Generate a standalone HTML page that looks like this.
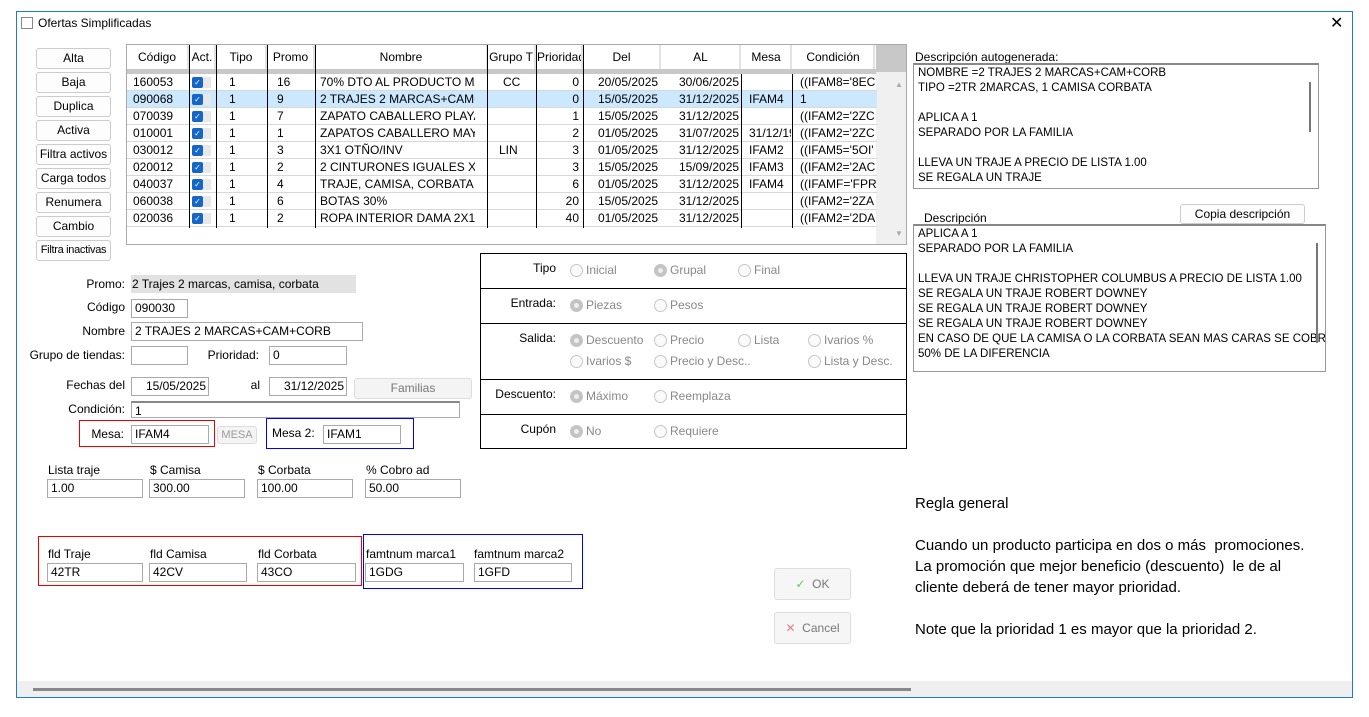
<!DOCTYPE html>
<html><head><meta charset="utf-8"><style>
*{margin:0;padding:0;box-sizing:border-box}
body{width:1369px;height:717px;background:#fff;font-family:"Liberation Sans",sans-serif;font-size:12px;color:#000;position:relative;overflow:hidden}
.a{position:absolute;white-space:nowrap}
.win{position:absolute;left:16px;top:11px;width:1337px;height:687px;border:1px solid #1e7bd0}
.btn{position:absolute;left:36px;width:75px;height:21px;border:1px solid #ccc;border-radius:3px;background:#fdfdfd;text-align:center;line-height:19px;white-space:nowrap;overflow:hidden}
.inp{position:absolute;height:19px;border:1px solid #aaa;background:#fff;padding-left:3px;line-height:17px;white-space:nowrap}
.lbl{position:absolute;text-align:right;white-space:nowrap}
.hc{position:absolute;top:45px;height:24px;background:#fff;text-align:center;line-height:24px;border-right:2px solid #e2e2e2}
.row{position:absolute;left:127px;width:750px;height:17px;border-bottom:1px solid #d8d8d8}
.c{position:absolute;top:0;height:17px;line-height:17px;overflow:hidden;white-space:nowrap}
.vl{position:absolute;top:45px;height:183px;width:1px;background:#000}
.chk{position:absolute;left:65px;top:3px;width:11px;height:11px;background:#1466c8;border-radius:2px;color:#fff;font-size:8px;line-height:11px;text-align:center}
.chk:after{content:"";position:absolute;left:11px;top:0;width:8px;height:11px;background:#e8e8e8}
.rad{position:absolute;width:13px;height:13px;border:1px solid #c6c6c6;border-radius:50%;background:#fafafa}
.rad.on{background:#c4c4c4;border-color:#c4c4c4}
.rad.on:after{content:"";position:absolute;left:3px;top:3px;width:5px;height:5px;border-radius:50%;background:#eee}
.rt{position:absolute;color:#888;white-space:nowrap}
.box{position:absolute;left:480px;width:427px;border:1px solid #000;border-bottom:none}
.ta{position:absolute;border:1px solid #999;border-top:2px solid #888;background:#fff;padding:1px 0 0 4px;line-height:15px;white-space:pre;overflow:hidden;font-size:11.5px}
</style></head><body>
<div class="win"></div>
<div class="a" style="left:21px;top:17px;width:12px;height:12px;border:1px solid #888"></div>
<div class="a" style="left:38px;top:16px">Ofertas Simplificadas</div>
<div class="a" style="left:1330px;top:13px;font-size:16px">✕</div>

<div class="btn" style="top:48px">Alta</div>
<div class="btn" style="top:72px">Baja</div>
<div class="btn" style="top:96px">Duplica</div>
<div class="btn" style="top:120px">Activa</div>
<div class="btn" style="top:144px">Filtra activos</div>
<div class="btn" style="top:168px">Carga todos</div>
<div class="btn" style="top:192px">Renumera</div>
<div class="btn" style="top:216px">Cambio</div>
<div class="btn" style="top:240px;font-size:11px;letter-spacing:-0.3px">Filtra inactivas</div>

<!-- grid -->
<div class="a" style="left:126px;top:44px;width:781px;height:201px;border:1px solid #aaa;background:#fff"></div>
<div class="a" style="left:127px;top:69px;width:749px;height:5px;background:#c8c8c8"></div>
<div class="a" style="left:876px;top:45px;width:30px;height:199px;background:#f0f0f0"></div>
<div class="a" style="left:876px;top:45px;width:30px;height:27px;background:#c8c8c8"></div>
<div class="a" style="left:895px;top:80px;color:#aaa;font-size:8px">▲</div>
<div class="a" style="left:895px;top:229px;color:#aaa;font-size:8px">▼</div>
<div class="hc" style="left:127px;width:62px">Código</div>
<div class="hc" style="left:190px;width:26px">Act.</div>
<div class="hc" style="left:217px;width:50px">Tipo</div>
<div class="hc" style="left:268px;width:47px">Promo</div>
<div class="hc" style="left:316px;width:172px">Nombre</div>
<div class="hc" style="left:488px;width:48px">Grupo T</div>
<div class="hc" style="left:537px;width:46px;overflow:hidden">Prioridad</div>
<div class="hc" style="left:584px;width:77px">Del</div>
<div class="hc" style="left:662px;width:79px">AL</div>
<div class="hc" style="left:742px;width:50px">Mesa</div>
<div class="hc" style="left:793px;width:82px">Condición</div>

<div class="row" style="top:74px"><div class="c" style="left:6px">160053</div><div class="chk">✓</div><div class="c" style="left:102px">1</div><div class="c" style="left:150px">16</div><div class="c" style="left:193px;width:155px">70% DTO AL PRODUCTO MA</div><div class="c" style="left:376px">CC</div><div class="c" style="left:408px;width:44px;text-align:right">0</div><div class="c" style="left:471px">20/05/2025</div><div class="c" style="left:552px">30/06/2025</div><div class="c" style="left:673px">((IFAM8='8EC</div></div>
<div class="row" style="top:91px;background:#cce8ff"><div class="c" style="left:6px">090068</div><div class="chk">✓</div><div class="c" style="left:102px">1</div><div class="c" style="left:150px">9</div><div class="c" style="left:193px;width:155px">2 TRAJES 2 MARCAS+CAM+(</div><div class="c" style="left:408px;width:44px;text-align:right">0</div><div class="c" style="left:471px">15/05/2025</div><div class="c" style="left:552px">31/12/2025</div><div class="c" style="left:622px">IFAM4</div><div class="c" style="left:673px">1</div></div>
<div class="row" style="top:108px"><div class="c" style="left:6px">070039</div><div class="chk">✓</div><div class="c" style="left:102px">1</div><div class="c" style="left:150px">7</div><div class="c" style="left:193px;width:155px">ZAPATO CABALLERO PLAYA</div><div class="c" style="left:408px;width:44px;text-align:right">1</div><div class="c" style="left:471px">15/05/2025</div><div class="c" style="left:552px">31/12/2025</div><div class="c" style="left:673px">((IFAM2='2ZC</div></div>
<div class="row" style="top:125px"><div class="c" style="left:6px">010001</div><div class="chk">✓</div><div class="c" style="left:102px">1</div><div class="c" style="left:150px">1</div><div class="c" style="left:193px;width:155px">ZAPATOS CABALLERO MAY(</div><div class="c" style="left:408px;width:44px;text-align:right">2</div><div class="c" style="left:471px">01/05/2025</div><div class="c" style="left:552px">31/07/2025</div><div class="c" style="left:622px;width:42px">31/12/19</div><div class="c" style="left:673px">((IFAM2='2ZC</div></div>
<div class="row" style="top:142px"><div class="c" style="left:6px">030012</div><div class="chk">✓</div><div class="c" style="left:102px">1</div><div class="c" style="left:150px">3</div><div class="c" style="left:193px;width:155px">3X1 OTÑO/INV</div><div class="c" style="left:372px">LIN</div><div class="c" style="left:408px;width:44px;text-align:right">3</div><div class="c" style="left:471px">01/05/2025</div><div class="c" style="left:552px">31/12/2025</div><div class="c" style="left:622px">IFAM2</div><div class="c" style="left:673px">((IFAM5='5OI'</div></div>
<div class="row" style="top:159px"><div class="c" style="left:6px">020012</div><div class="chk">✓</div><div class="c" style="left:102px">1</div><div class="c" style="left:150px">2</div><div class="c" style="left:193px;width:155px">2 CINTURONES IGUALES X $1</div><div class="c" style="left:408px;width:44px;text-align:right">3</div><div class="c" style="left:471px">15/05/2025</div><div class="c" style="left:552px">15/09/2025</div><div class="c" style="left:622px">IFAM3</div><div class="c" style="left:673px">((IFAM2='2AC</div></div>
<div class="row" style="top:176px"><div class="c" style="left:6px">040037</div><div class="chk">✓</div><div class="c" style="left:102px">1</div><div class="c" style="left:150px">4</div><div class="c" style="left:193px;width:155px">TRAJE, CAMISA, CORBATA</div><div class="c" style="left:408px;width:44px;text-align:right">6</div><div class="c" style="left:471px">01/05/2025</div><div class="c" style="left:552px">31/12/2025</div><div class="c" style="left:622px">IFAM4</div><div class="c" style="left:673px">((IFAMF='FPR</div></div>
<div class="row" style="top:193px"><div class="c" style="left:6px">060038</div><div class="chk">✓</div><div class="c" style="left:102px">1</div><div class="c" style="left:150px">6</div><div class="c" style="left:193px;width:155px">BOTAS 30%</div><div class="c" style="left:408px;width:44px;text-align:right">20</div><div class="c" style="left:471px">15/05/2025</div><div class="c" style="left:552px">31/12/2025</div><div class="c" style="left:673px">((IFAM2='2ZA</div></div>
<div class="row" style="top:210px"><div class="c" style="left:6px">020036</div><div class="chk">✓</div><div class="c" style="left:102px">1</div><div class="c" style="left:150px">2</div><div class="c" style="left:193px;width:155px">ROPA INTERIOR DAMA 2X1 F</div><div class="c" style="left:408px;width:44px;text-align:right">40</div><div class="c" style="left:471px">01/05/2025</div><div class="c" style="left:552px">31/12/2025</div><div class="c" style="left:673px">((IFAM2='2DA</div></div>
<div class="vl" style="left:189px"></div><div class="vl" style="left:216px"></div><div class="vl" style="left:267px"></div><div class="vl" style="left:315px"></div><div class="vl" style="left:487px"></div><div class="vl" style="left:536px"></div><div class="vl" style="left:583px"></div><div class="vl" style="left:741px;top:74px;height:154px"></div><div class="vl" style="left:792px;top:74px;height:154px"></div>

<!-- form -->
<div class="lbl" style="left:60px;width:65px;top:277px">Promo:</div>
<div class="a" style="left:131px;top:275px;width:225px;height:18px;background:#e2e2e2;padding:2px 1px">2 Trajes 2 marcas, camisa, corbata</div>
<div class="lbl" style="left:60px;width:65px;top:300px">Código</div>
<div class="inp" style="left:131px;top:299px;width:57px">090030</div>
<div class="lbl" style="left:60px;width:65px;top:324px">Nombre</div>
<div class="inp" style="left:131px;top:322px;width:232px">2 TRAJES 2 MARCAS+CAM+CORB</div>
<div class="lbl" style="left:20px;width:105px;top:348px">Grupo de tiendas:</div>
<div class="inp" style="left:131px;top:346px;width:57px"></div>
<div class="lbl" style="left:200px;width:59px;top:348px">Prioridad:</div>
<div class="inp" style="left:269px;top:346px;width:78px">0</div>
<div class="lbl" style="left:40px;width:85px;top:378px">Fechas del</div>
<div class="inp" style="left:131px;top:377px;width:78px;text-align:right;padding-right:2px">15/05/2025</div>
<div class="lbl" style="left:240px;width:20px;top:378px">al</div>
<div class="inp" style="left:269px;top:377px;width:78px;text-align:right;padding-right:2px">31/12/2025</div>
<div class="a" style="left:354px;top:378px;width:118px;height:21px;border:1px solid #ddd;border-radius:3px;background:#f4f4f4;color:#777;text-align:center;line-height:19px">Familias</div>
<div class="lbl" style="left:40px;width:85px;top:402px">Condición:</div>
<div class="inp" style="left:131px;top:401px;width:329px;height:17px;border-top:2px solid #888">1</div>
<div class="a" style="left:79px;top:420px;width:136px;height:27px;border:1px solid #e00"></div>
<div class="lbl" style="left:80px;width:44px;top:427px">Mesa:</div>
<div class="inp" style="left:131px;top:425px;width:78px">IFAM4</div>
<div class="a" style="left:217px;top:426px;width:40px;height:18px;border:1px solid #ddd;border-radius:3px;background:#f4f4f4;color:#999;text-align:center;line-height:16px;font-size:11px">MESA</div>
<div class="a" style="left:266px;top:418px;width:148px;height:31px;border:1px solid #00f"></div>
<div class="a" style="left:272px;top:426px">Mesa 2:</div>
<div class="inp" style="left:323px;top:425px;width:78px">IFAM1</div>

<div class="a" style="left:48px;top:463px">Lista traje</div><div class="inp" style="left:47px;top:479px;width:96px">1.00</div>
<div class="a" style="left:150px;top:463px">$ Camisa</div><div class="inp" style="left:149px;top:479px;width:96px">300.00</div>
<div class="a" style="left:258px;top:463px">$ Corbata</div><div class="inp" style="left:257px;top:479px;width:96px">100.00</div>
<div class="a" style="left:366px;top:463px">% Cobro ad</div><div class="inp" style="left:365px;top:479px;width:96px">50.00</div>

<div class="a" style="left:38px;top:536px;width:324px;height:50px;border:1px solid #e00"></div>
<div class="a" style="left:363px;top:534px;width:220px;height:55px;border:1px solid #00f"></div>
<div class="a" style="left:48px;top:547px">fld Traje</div><div class="inp" style="left:47px;top:563px;width:96px">42TR</div>
<div class="a" style="left:150px;top:547px">fld Camisa</div><div class="inp" style="left:149px;top:563px;width:98px">42CV</div>
<div class="a" style="left:258px;top:547px">fld Corbata</div><div class="inp" style="left:257px;top:563px;width:99px">43CO</div>
<div class="a" style="left:366px;top:547px">famtnum marca1</div><div class="inp" style="left:365px;top:563px;width:99px">1GDG</div>
<div class="a" style="left:474px;top:547px">famtnum marca2</div><div class="inp" style="left:474px;top:563px;width:98px">1GFD</div>

<div class="a" style="left:774px;top:568px;width:77px;height:32px;border:1px solid #ddd;border-radius:3px;background:#f6f6f6;color:#777;text-align:center;line-height:30px"><span style="color:#6bbf6b">✓</span>&nbsp;&nbsp;OK</div>
<div class="a" style="left:774px;top:612px;width:77px;height:32px;border:1px solid #ddd;border-radius:3px;background:#f6f6f6;color:#777;text-align:center;line-height:30px"><span style="color:#e08080">✕</span>&nbsp;&nbsp;Cancel</div>

<!-- options box -->
<div class="box" style="top:253px;height:36px"></div>
<div class="box" style="top:288px;height:36px"></div>
<div class="box" style="top:323px;height:57px"></div>
<div class="box" style="top:379px;height:36px"></div>
<div class="box" style="top:414px;height:35px;border-bottom:1px solid #000"></div>
<div class="lbl" style="left:480px;width:76px;top:261px">Tipo</div>
<div class="lbl" style="left:480px;width:76px;top:296px">Entrada:</div>
<div class="lbl" style="left:480px;width:76px;top:331px">Salida:</div>
<div class="lbl" style="left:480px;width:76px;top:387px">Descuento:</div>
<div class="lbl" style="left:480px;width:76px;top:422px">Cupón</div>

<div class="rad" style="left:570px;top:264px"></div><div class="rt" style="left:586px;top:263px">Inicial</div>
<div class="rad on" style="left:654px;top:264px"></div><div class="rt" style="left:670px;top:263px">Grupal</div>
<div class="rad" style="left:738px;top:264px"></div><div class="rt" style="left:754px;top:263px">Final</div>
<div class="rad on" style="left:570px;top:299px"></div><div class="rt" style="left:586px;top:298px">Piezas</div>
<div class="rad" style="left:654px;top:299px"></div><div class="rt" style="left:670px;top:298px">Pesos</div>
<div class="rad on" style="left:570px;top:334px"></div><div class="rt" style="left:586px;top:333px">Descuento</div>
<div class="rad" style="left:654px;top:334px"></div><div class="rt" style="left:670px;top:333px">Precio</div>
<div class="rad" style="left:738px;top:334px"></div><div class="rt" style="left:754px;top:333px">Lista</div>
<div class="rad" style="left:808px;top:334px"></div><div class="rt" style="left:824px;top:333px">Ivarios %</div>
<div class="rad" style="left:570px;top:355px"></div><div class="rt" style="left:586px;top:354px">Ivarios $</div>
<div class="rad" style="left:654px;top:355px"></div><div class="rt" style="left:670px;top:354px">Precio y Desc..</div>
<div class="rad" style="left:808px;top:355px"></div><div class="rt" style="left:824px;top:354px">Lista y Desc.</div>
<div class="rad on" style="left:570px;top:390px"></div><div class="rt" style="left:586px;top:389px">Máximo</div>
<div class="rad" style="left:654px;top:390px"></div><div class="rt" style="left:670px;top:389px">Reemplaza</div>
<div class="rad on" style="left:570px;top:425px"></div><div class="rt" style="left:586px;top:424px">No</div>
<div class="rad" style="left:654px;top:425px"></div><div class="rt" style="left:670px;top:424px">Requiere</div>

<!-- right panel -->
<div class="a" style="left:915px;top:50px">Descripción autogenerada:</div>
<div class="ta" style="left:913px;top:63px;width:406px;height:126px">NOMBRE =2 TRAJES 2 MARCAS+CAM+CORB
TIPO =2TR 2MARCAS, 1 CAMISA CORBATA

APLICA A 1
SEPARADO POR LA FAMILIA

LLEVA UN TRAJE A PRECIO DE LISTA 1.00
SE REGALA UN TRAJE</div>
<div class="a" style="left:1309px;top:82px;width:2px;height:50px;background:#777"></div>
<div class="a" style="left:924px;top:211px">Descripción</div>
<div class="a" style="left:1180px;top:204px;width:125px;height:20px;border:1px solid #ccc;border-radius:3px;background:#fdfdfd;text-align:center;line-height:18px">Copia descripción</div>
<div class="ta" style="left:913px;top:224px;width:413px;height:148px;padding-right:14px">APLICA A 1
SEPARADO POR LA FAMILIA

LLEVA UN TRAJE CHRISTOPHER COLUMBUS A PRECIO DE LISTA 1.00
SE REGALA UN TRAJE ROBERT DOWNEY
SE REGALA UN TRAJE ROBERT DOWNEY
SE REGALA UN TRAJE ROBERT DOWNEY
EN CASO DE QUE LA CAMISA O LA CORBATA SEAN MAS CARAS SE COBR
50% DE LA DIFERENCIA</div>
<div class="a" style="left:1316px;top:243px;width:2px;height:100px;background:#777"></div>

<div class="a" style="left:915px;top:493px;font-size:15px;line-height:21px;white-space:pre">Regla general

Cuando un producto participa en dos o más  promociones.
La promoción que mejor beneficio (descuento)  le de al
cliente deberá de tener mayor prioridad.

Note que la prioridad 1 es mayor que la prioridad 2.</div>

<div class="a" style="left:17px;top:681px;width:1335px;height:16px;background:#efefef"></div>
<div class="a" style="left:33px;top:688px;width:878px;height:3px;background:#888"></div>
</body></html>
